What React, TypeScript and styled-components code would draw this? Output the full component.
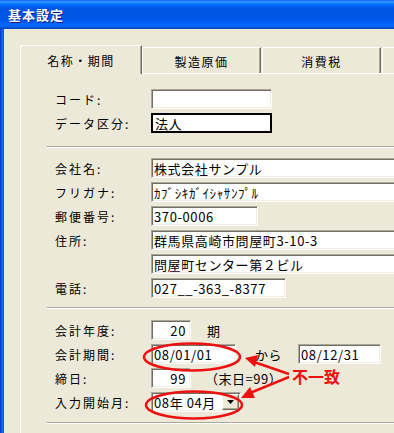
import styled, { createGlobalStyle } from 'styled-components';

const GlobalStyle = createGlobalStyle`
  html, body {
    margin: 0;
    padding: 0;
    background: #ECE9D8;
    overflow: hidden;
  }
  body {
    font-family: "Noto Sans CJK JP", "Noto Sans", sans-serif;
    color: #000;
  }
`;

const Screen = styled.div`
  position: relative;
  width: 394px;
  height: 433px;
  overflow: hidden;
  display: flex;
  flex-direction: column;
  background: #ECE9D8;
`;

const TitleBar = styled.div`
  height: 29px;
  flex-shrink: 0;
  display: flex;
  align-items: center;
  padding-left: 8px;
  background: linear-gradient(
    to bottom,
    #0058ee 0%,
    #3a93ff 4%,
    #288eff 8%,
    #127dff 12%,
    #036ffc 16%,
    #0262ee 22%,
    #0057e5 28%,
    #0054e3 56%,
    #0055eb 66%,
    #005bf5 76%,
    #026afe 86%,
    #0062ef 92%,
    #0052d6 96%,
    #0040ab 100%
  );
  color: #fff;
  font-size: 13px;
  font-weight: 700;
  letter-spacing: 1px;
  text-shadow: 1px 1px 0 #0a1883;
`;

const Frame = styled.div`
  flex: 1;
  display: flex;
  min-height: 0;
`;

const BlueEdge = styled.div`
  width: 4px;
  flex-shrink: 0;
  background: linear-gradient(to right, #0831d9, #166aee 60%, #0855dd);
`;

const Client = styled.div`
  flex: 1;
  min-width: 0;
  display: flex;
  flex-direction: column;
  padding: 16px 0 0 16px;
`;

const TabStrip = styled.div`
  display: flex;
  align-items: flex-start;
  height: 28px;
  flex-shrink: 0;
`;

const Tab = styled.div<{ $active?: boolean; $w: number }>`
  position: relative;
  z-index: ${p => (p.$active ? 1 : 0)};
  box-sizing: border-box;
  width: ${p => p.$w}px;
  flex-shrink: 0;
  height: ${p => (p.$active ? 29 : 26)}px;
  margin-top: ${p => (p.$active ? 0 : 2)}px;
  margin-right: ${p => (p.$active ? 0 : 1)}px;
  display: flex;
  align-items: center;
  justify-content: center;
  padding-top: ${p => (p.$active ? 0 : 1)}px;
  background: #ECE9D8;
  border-top: 1px solid #fff;
  border-left: 1px solid #fff;
  border-right: 1px solid #716f64;
  box-shadow: inset -1px 0 0 #aca899;
  border-top-left-radius: 2px;
  font-size: 12px;
  letter-spacing: 1.5px;
  white-space: nowrap;
`;

const Panel = styled.div`
  flex: 1;
  border-top: 1px solid #fff;
  border-left: 1px solid #fff;
  padding-left: 26px;
`;

const Section = styled.div<{ $top: number; $bottom: number }>`
  display: flex;
  flex-direction: column;
  gap: 4px;
  padding: ${p => p.$top}px 0 ${p => p.$bottom}px 8px;
`;

const Rule = styled.div`
  height: 1px;
  background: #aca899;
  border-bottom: 1px solid #fff;
`;

const Row = styled.div`
  display: flex;
  align-items: center;
  height: 20px;
`;

const Label = styled.div`
  width: 96px;
  flex-shrink: 0;
  font-size: 12px;
  letter-spacing: 2px;
  white-space: nowrap;
`;

const Field = styled.div<{ $w: number; $right?: boolean; $focus?: boolean }>`
  box-sizing: border-box;
  width: ${p => p.$w}px;
  height: 20px;
  flex-shrink: 0;
  display: flex;
  align-items: center;
  justify-content: ${p => (p.$right ? 'flex-end' : 'flex-start')};
  padding: 0 ${p => (p.$right ? 4 : 1)}px 0 2px;
  background: #fff;
  font-size: 13px;
  letter-spacing: 0.6px;
  white-space: nowrap;
  overflow: hidden;
  ${p =>
    p.$focus
      ? `border: 2px solid #000;`
      : `border: 1px solid;
         border-color: #aca899 #fff #fff #aca899;
         box-shadow: inset 1px 1px 0 #716f64, inset -1px -1px 0 #f1efe2;`}
`;

const SelectText = styled.span`
  flex: 1;
`;

const DropButton = styled.div`
  box-sizing: border-box;
  width: 17px;
  height: 16px;
  display: flex;
  align-items: center;
  justify-content: center;
  background: #ECE9D8;
  border: 1px solid;
  border-color: #fff #716f64 #716f64 #fff;
  box-shadow: inset -1px -1px 0 #aca899;
`;

const After = styled.span<{ $gap: number }>`
  margin-left: ${p => p.$gap}px;
  margin-right: ${p => (p.$gap > 15 ? 16 : 0)}px;
  font-size: 13px;
  letter-spacing: 0.5px;
  white-space: nowrap;
`;

const Annotation = styled.svg`
  position: absolute;
  left: 0;
  top: 0;
  width: 394px;
  height: 433px;
  pointer-events: none;
`;

const Mismatch = styled.span`
  position: absolute;
  left: 292px;
  top: 367px;
  font-size: 16px;
  line-height: 18px;
  font-weight: 700;
  color: #ee1111;
  white-space: nowrap;
`;

const RED = '#ee1111';

export default function App() {
  return (
    <Screen>
      <GlobalStyle />
      <TitleBar>基本設定</TitleBar>
      <Frame>
        <BlueEdge />
        <Client>
          <TabStrip>
            <Tab $active $w={122}>名称・期間</Tab>
            <Tab $w={119}>製造原価</Tab>
            <Tab $w={119}>消費税</Tab>
            <Tab $w={40}></Tab>
          </TabStrip>
          <Panel>
            <Section $top={15} $bottom={13}>
              <Row>
                <Label>コード:</Label>
                <Field $w={121} />
              </Row>
              <Row>
                <Label>データ区分:</Label>
                <Field $w={121} $focus>法人</Field>
              </Row>
            </Section>
            <Rule />
            <Section $top={10} $bottom={9}>
              <Row>
                <Label>会社名:</Label>
                <Field $w={260}>株式会社サンプル</Field>
              </Row>
              <Row>
                <Label>フリガナ:</Label>
                <Field $w={260}>ｶﾌﾞｼｷｶﾞｲｼｬｻﾝﾌﾟﾙ</Field>
              </Row>
              <Row>
                <Label>郵便番号:</Label>
                <Field $w={107}>370-0006</Field>
              </Row>
              <Row>
                <Label>住所:</Label>
                <Field $w={260}>群馬県高崎市問屋町3-10-3</Field>
              </Row>
              <Row>
                <Label />
                <Field $w={260}>問屋町センター第２ビル</Field>
              </Row>
              <Row>
                <Label>電話:</Label>
                <Field $w={135}>027__-363_-8377</Field>
              </Row>
            </Section>
            <Rule />
            <Section $top={11} $bottom={10}>
              <Row>
                <Label>会計年度:</Label>
                <Field $w={40} $right>20</Field>
                <After $gap={16}>期</After>
              </Row>
              <Row>
                <Label>会計期間:</Label>
                <Field $w={85}>08/01/01</Field>
                <After $gap={19}>から</After>
                <Field $w={83}>08/12/31</Field>
              </Row>
              <Row>
                <Label>締日:</Label>
                <Field $w={40} $right>99</Field>
                <After $gap={14}>（末日=99）</After>
              </Row>
              <Row>
                <Label>入力開始月:</Label>
                <Field $w={90}>
                  <SelectText>08年 04月</SelectText>
                  <DropButton>
                    <svg width="7" height="4" viewBox="0 0 7 4">
                      <path d="M0 0h7L3.5 4z" fill="#000" />
                    </svg>
                  </DropButton>
                </Field>
              </Row>
            </Section>
            <Rule />
          </Panel>
        </Client>
      </Frame>
      <Annotation viewBox="0 0 394 433">
        <ellipse cx="192" cy="357" rx="48" ry="13.5" fill="none" stroke={RED} strokeWidth="2.5" />
        <ellipse cx="194" cy="405" rx="48" ry="13.5" fill="none" stroke={RED} strokeWidth="2.5" />
        <line x1="289" y1="374" x2="254" y2="362" stroke={RED} strokeWidth="2.5" />
        <polygon points="245,358 258,355 255,367" fill={RED} />
        <line x1="289" y1="377" x2="250" y2="393" stroke={RED} strokeWidth="2.5" />
        <polygon points="241,398 250,387 255,398" fill={RED} />
      </Annotation>
      <Mismatch>不一致</Mismatch>
    </Screen>
  );
}
